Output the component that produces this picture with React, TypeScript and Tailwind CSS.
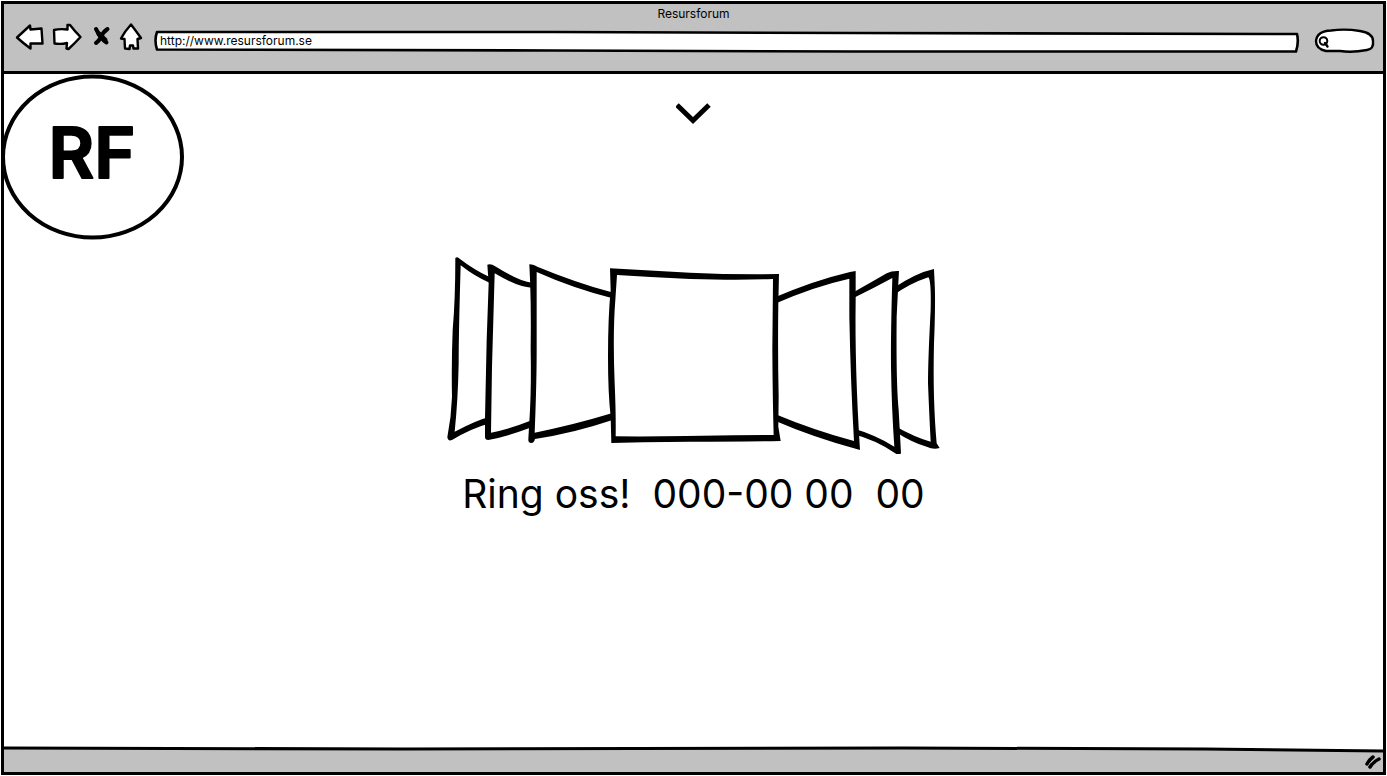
import React from "react";

const navButton = "flex h-7 shrink-0 items-center justify-center";

function Toolbar() {
  return (
    <header className="h-[70px] border-b-[3px] border-black bg-[#c1c1c1]">
      <h1 className="pt-0.5 text-center text-xs leading-4">Resursforum</h1>
      <div className="flex items-start pr-2 pl-[11px]">
        <nav className="flex shrink-0 items-center pt-px" aria-label="Browser">
          <button className={navButton} aria-label="Back">
            <svg width="28" height="28" viewBox="15 23 28 28" className="overflow-visible" fill="#fff" stroke="#000" strokeWidth="2.4" strokeLinejoin="round">
              <path d="M17 37.5 Q24 31 30 25.500 L30.500 29.500 L41.500 28.500 Q42 36 42.500 43.500 L30.500 43.500 L30.500 48.500 Q23 43 17 37.500Z" />
            </svg>
          </button>
          <button className={`${navButton} ml-2.5`} aria-label="Forward">
            <svg width="28" height="28" viewBox="53 23 28 28" className="overflow-visible" fill="#fff" stroke="#000" strokeWidth="2.4" strokeLinejoin="round">
              <path d="M54 30 Q60 28.500 67.500 29.500 L67.500 25 L70 25 Q75 31.500 80.500 37 Q74 44 68.500 49 L66.500 48.500 L67 43 Q61 44.500 54.500 43.500Z" />
            </svg>
          </button>
          <button className={`${navButton} ml-3`} aria-label="Stop">
            <svg width="17" height="28" viewBox="93 23 17 28" className="overflow-visible" fill="none" stroke="#000" strokeWidth="4" strokeLinecap="round">
              <path d="M96 29 Q101 39 106.500 42.500" />
              <path d="M107.500 29 Q103 32 101 37 Q99 41 96 43" />
              <path d="M99 34 L105 40" strokeWidth="5" />
            </svg>
          </button>
          <button className={`${navButton} ml-2.5`} aria-label="Home">
            <svg width="22" height="28" viewBox="119 23 22 28" className="overflow-visible" fill="#fff" stroke="#000" strokeWidth="2.4" strokeLinejoin="round">
              <path d="M130 24.500 Q135 31 140 38 L136.500 39 L137 48.500 L132.500 48.500 L132 45.500 L129 45.500 L128.500 49 L124 48.500 L123.500 39 L120 38.500 Q124 31 130 24.500Z" />
            </svg>
          </button>
        </nav>
        <div className="relative mt-2 ml-3 h-[22px] min-w-0 flex-1">
          <svg className="absolute inset-0 h-full w-full overflow-visible" viewBox="0 0 1146 22" preserveAspectRatio="none" fill="#fff" stroke="#000" strokeWidth="2.600" strokeLinejoin="round" aria-hidden="true">
            <path d="M3 2 L400 2 L700 3 L1144 4 Q1146 12 1143 21.500 L700 21.500 L400 20.500 L3 19.500 Q0 10 3 2Z" vectorEffect="non-scaling-stroke" />
          </svg>
          <input type="text" aria-label="Address" defaultValue="http://www.resursforum.se" className="relative block h-5 w-full bg-transparent px-1.5 text-xs leading-4 outline-none" />
        </div>
        <div className="relative mt-[7px] ml-4 h-[24px] w-[60px] shrink-0">
          <svg className="absolute inset-0 overflow-visible" width="60" height="24" viewBox="1315 29 60 24" fill="#fff" stroke="#000" strokeWidth="2.400" aria-hidden="true">
            <path d="M1316 41 Q1317 31 1331 30.500 Q1345 28.500 1360 31 Q1373 33 1373 41 Q1374 49 1367 50 Q1352 53 1340 51 L1326 51 Q1316 49 1316 41Z" />
            <circle cx="1323.500" cy="41" r="3.800" strokeWidth="2" />
            <path d="M1325 43 L1327.500 46.500" strokeWidth="2.400" strokeLinecap="round" />
          </svg>
          <input type="search" aria-label="Search" className="relative block h-full w-full bg-transparent pr-2 pl-4 text-xs outline-none" />
        </div>
      </div>
    </header>
  );
}

function Logo() {
  return (
    <a href="#" className="block">
      <svg className="overflow-visible" width="180" height="166" viewBox="4 74 180 166">
        <ellipse cx="92.500" cy="157" rx="89.500" ry="80.500" fill="#fff" stroke="#000" strokeWidth="4" />
        <text x="92" y="178" textAnchor="middle" fontSize="70" fontWeight="600" stroke="#000" strokeWidth="2" strokeLinejoin="round">
          RF
        </text>
      </svg>
    </a>
  );
}

const panels = [
  {
    outer: "M46 24 Q52 18 60 27 Q100 58 150 82 V520 Q95 535 36 570 Q24 575 22 562 Q34 500 36 440 Q34 340 38 240 Q46 150 46 24Z",
    inner: "M62 46 Q105 80 150 99 V500 Q110 510 44 545 Q54 450 56 340 Q56 250 62 46Z",
  },
  {
    outer: "M142 44 Q152 40 168 50 Q240 95 275 98 V532 Q200 560 145 570 Q135 570 135 560 V505 L140 270 L146 100Z",
    inner: "M164 70 Q235 112 275 113 V511 Q210 537 153 548 L156 350Z",
  },
  {
    outer: "M268 43 Q275 42 292 50 Q400 95 515 127 V511 Q400 550 285 567 Q282 579 274 579 Q264 579 265 568 L270 480 Q274 400 272 300 Q274 150 268 43Z",
    inner: "M290 66 Q400 115 515 144 V490 Q400 525 284 548 Q290 400 290 300Z",
  },
  {
    outer: "M1362 113 Q1430 68 1482 57 L1484 100 Q1487 160 1482 280 Q1478 450 1490 580 L1499 594 Q1480 600 1460 590 Q1420 580 1362 543Z",
    inner: "M1360 136 Q1410 100 1465 82 Q1474 90 1472 180 Q1464 330 1464 400 Q1468 500 1472 575 Q1430 565 1360 526Z",
  },
  {
    outer: "M1238 128 Q1280 105 1340 70 Q1355 62 1377 63 Q1374 120 1370 200 Q1368 400 1376 480 Q1380 550 1383 610 Q1378 616 1372 614 Q1310 570 1238 552Z",
    inner: "M1236 146 Q1300 115 1357 84 Q1352 250 1353 350 Q1355 480 1363 590 Q1310 556 1236 534Z",
  },
  {
    outer: "M1005 142 Q1120 92 1230 66 L1247 63 L1247 150 Q1244 350 1260 600 Q1120 562 1005 512Z",
    inner: "M1003 162 Q1120 110 1228 86 L1228 200 Q1232 400 1242 573 Q1120 540 1003 491Z",
  },
  {
    outer: "M510 55 Q630 62 750 68 Q880 74 1017 72 L1015 160 Q1013 300 1016 440 L1015 530 L1022 573 Q900 575 750 575 L610 577 L514 579 L512 500 Q504 430 504 320 Q504 200 512 120Z",
    inner: "M531 75 Q640 82 750 87 Q900 91 999 87 L997 300 Q998 450 1001 555 L880 556 Q700 560 527 559 Q528 490 524 400 Q518 250 526 150Z",
  },
];

function CoverFlow() {
  return (
    <svg className="w-[494px] max-w-full" viewBox="447 256 494 198" role="img" aria-label="Image carousel">
      <g transform="translate(440 250) scale(.33333)">
        {panels.map((panel) => (
          <g key={panel.outer}>
            <path d={panel.outer} fill="#000" />
            <path d={panel.inner} fill="#fff" />
          </g>
        ))}
      </g>
    </svg>
  );
}

function StatusBar() {
  return (
    <footer className="relative flex h-[26px] items-center justify-end bg-[#c1c1c1]">
      <svg className="absolute inset-0 h-full w-full overflow-visible" viewBox="0 0 1379 26" preserveAspectRatio="none" aria-hidden="true">
        <path d="M0 -1 V3 L900 2 L1200 3 L1379 5 V-1Z" fill="#fff" />
        <path d="M0 2 L400 3 L900 2 L1200 3 L1379 5" fill="none" stroke="#000" strokeWidth="3" vectorEffect="non-scaling-stroke" />
      </svg>
      <svg className="relative mt-1.5 mr-0.5" width="16" height="14" viewBox="0 0 16 14" fill="none" stroke="#000" strokeWidth="3.500" strokeLinecap="round" aria-hidden="true">
        <path d="M2 9 Q4 5 8 2" />
        <path d="M5 12 Q8 7 14 4" />
      </svg>
    </footer>
  );
}

export default function App() {
  return (
    <div className="flex min-h-screen flex-col bg-white p-px font-['Inter',sans-serif] text-black">
      <div className="flex flex-1 flex-col border-[3px] border-black">
        <Toolbar />
        <main className="flex flex-1 flex-col items-center">
          <div className="grid w-full grid-cols-[180px_1fr_180px] items-start">
            <Logo />
            <button className="mt-7 justify-self-center" aria-label="Show more">
              <svg width="36" height="24" viewBox="0 0 36 24" fill="none" stroke="#000" strokeWidth="5" strokeLinecap="butt" strokeLinejoin="miter">
                <path d="M1 3 L17 18.500 L33 3" />
              </svg>
            </button>
          </div>
          <div className="mt-4 flex w-full justify-center">
            <CoverFlow />
          </div>
          <p className="mt-4 text-center text-[39px] leading-12 whitespace-pre-wrap">
            {"Ring oss!  000-00 00  00"}
          </p>
        </main>
        <StatusBar />
      </div>
    </div>
  );
}
